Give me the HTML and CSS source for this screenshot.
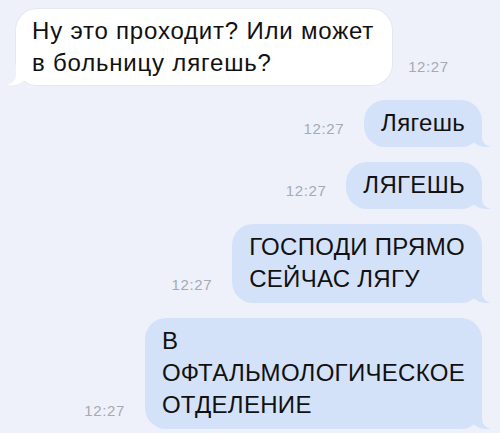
FILE: index.html
```html
<!DOCTYPE html>
<html>
<head>
    <meta charset="utf-8">
    <link rel="stylesheet" href="styles.css">
</head>
<body>
    <div class="chat">
        <div class="row row-in">
            <div class="bubble bubble-in">Ну это проходит? Или может<br>в больницу лягешь?</div>
            <span class="time">12:27</span>
        </div>
        <div class="row row-out">
            <span class="time">12:27</span>
            <div class="bubble bubble-out">Лягешь</div>
        </div>
        <div class="row row-out">
            <span class="time">12:27</span>
            <div class="bubble bubble-out">ЛЯГЕШЬ</div>
        </div>
        <div class="row row-out">
            <span class="time">12:27</span>
            <div class="bubble bubble-out">ГОСПОДИ ПРЯМО<br>СЕЙЧАС ЛЯГУ</div>
        </div>
        <div class="row row-out">
            <span class="time">12:27</span>
            <div class="bubble bubble-out">В<br>ОФТАЛЬМОЛОГИЧЕСКОЕ<br>ОТДЕЛЕНИЕ</div>
        </div>
    </div>
</body>
</html>
```

FILE: styles.css
```css
html, body {
	margin: 0;
	padding: 0;
	background: #eef1f9;
}
body {
	font-family: "Liberation Sans", Arial, sans-serif;
	color: #111;
	overflow: hidden;
}
.chat {
	display: flex;
	flex-direction: column;
	gap: 15px;
	padding: 9px 18px 0 16px;
}
.row {
	display: flex;
	align-items: flex-end;
}
.row-out {
	justify-content: flex-end;
}
.time {
	font-size: 15px;
	letter-spacing: 0.6px;
	line-height: 18px;
	color: #a4aab6;
	margin-bottom: 9px;
}
.row-in .time {
	margin-left: 16px;
	margin-bottom: 9px;
}
.row-out .time {
	margin-right: 20px;
}
.bubble {
	position: relative;
	font-size: 24px;
	letter-spacing: 0.3px;
	line-height: 32px;
	padding: 7px 17px 8px 17px;
	border-radius: 21px;
	z-index: 1;
}
.bubble-in {
	background: #ffffff;
	letter-spacing: 0.8px;
	padding: 6px 18px 6px 16px;
	box-shadow: 0 0 0 1px #e4e8f0;
}
.bubble-out {
	background: #d4e2f9;
}
/* tails */
.bubble::before,
.bubble::after {
	content: "";
	position: absolute;
	bottom: 0;
	height: 20px;
	z-index: -1;
}
.bubble-out::before {
	right: -8px;
	width: 20px;
	background: #d4e2f9;
	border-bottom-left-radius: 16px 14px;
}
.bubble-out::after {
	right: -10px;
	width: 10px;
	background: #eef1f9;
	border-bottom-left-radius: 10px;
}
.bubble-in::before {
	left: -8px;
	width: 20px;
	background: #ffffff;
	border-bottom-right-radius: 16px 14px;
}
.bubble-in::after {
	left: -10px;
	width: 10px;
	background: #eef1f9;
	border-bottom-right-radius: 10px;
}
```
